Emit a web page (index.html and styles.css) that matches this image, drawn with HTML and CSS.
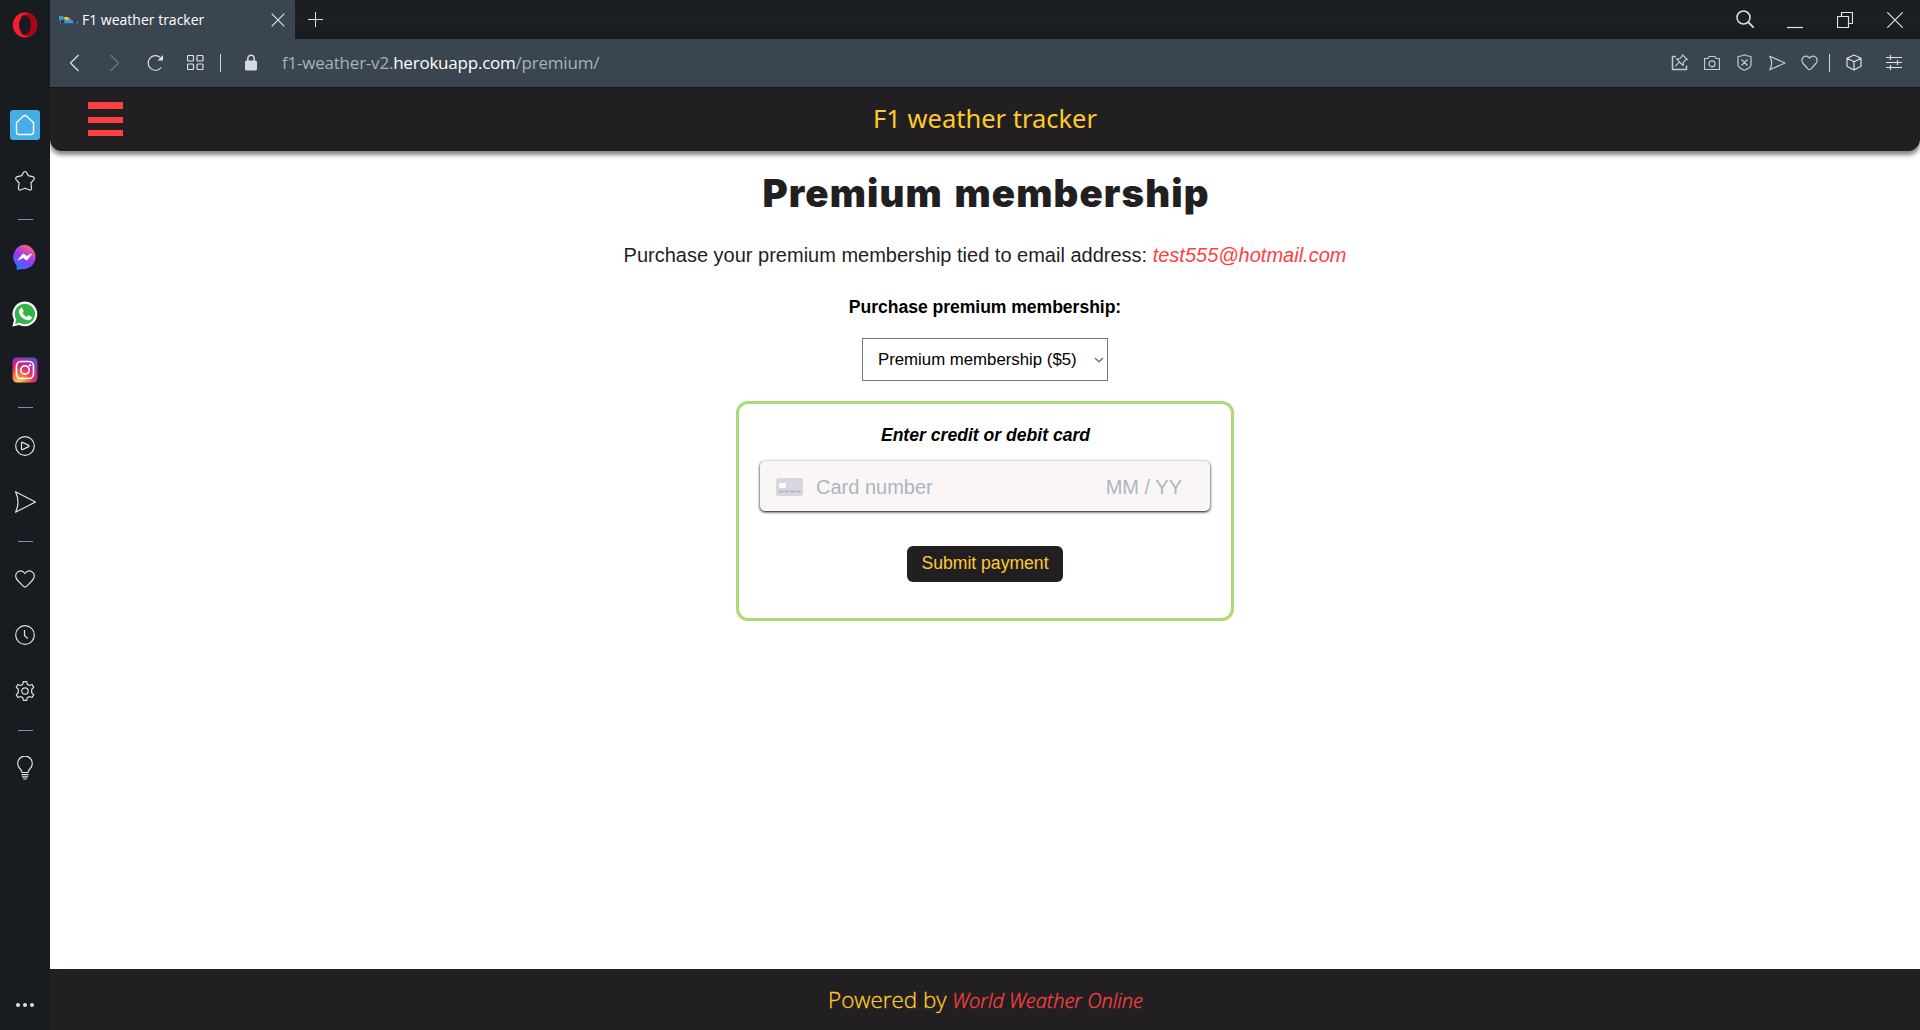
FILE: index.html
```
<!DOCTYPE html>
<html lang="en">
<head>
<meta charset="utf-8">
<title>F1 weather tracker</title>
<link rel="stylesheet" href="styles.css">
</head>
<body>
<div class="window">
  <aside class="sidebar">
    <div class="opera">
      <svg width="26" height="26" viewBox="0 0 26 26"><ellipse cx="13" cy="13" rx="12.2" ry="12.4" fill="#fa1e2d"/><path d="M9 4.5C12 1.500 17 .8 20.500 3.300A12.300 12.300 0 0 1 20.500 22.700C17 25.200 12 24.500 9 21.500Z" fill="#a80616"/><ellipse cx="13" cy="13" rx="6" ry="9.300" fill="#181b20"/></svg>
    </div>
    <nav class="rail">
      <a class="item"><span class="home"><svg width="22" height="24" viewBox="0 0 22 24"><path d="M2.500 9.500 9.300 3.200q1.700-1.500 3.400 0L19.500 9.500V19q0 2.500-2.500 2.500H5Q2.500 21.500 2.500 19Z" fill="none" stroke="#fff" stroke-width="1.400"/></svg></span></a>
      <a class="item"><svg class="line" width="22" height="22" viewBox="0 0 22 22"><path d="M9.400 2.600q1.600-2.200 3.200 0l1.700 3 4.900 1.300q1.900.8.700 2.700l-3 3.400.7 5.500q-.2 2-2 1.500L11 18.200 6.400 20q-1.900.5-2-1.500l.7-5.500-3-3.400Q1 7.700 2.800 6.900l4.900-1.300Z"/></svg></a>
      <hr>
      <a class="item"><svg width="26" height="26" viewBox="0 0 26 26"><defs><linearGradient id="ms" x1=".15" y1="1" x2=".7" y2="0"><stop offset="0" stop-color="#0a86ff"/><stop offset=".5" stop-color="#9a36ff"/><stop offset="1" stop-color="#ff5f72"/></linearGradient></defs><path d="M13 .8A12.200 12.200 0 1 1 9.500 25L4.700 26v-4.600A12.200 12.200 0 0 1 13 .8Z" fill="url(#ms)"/><path d="m6.300 16 4.300-5.700q.7-.6 1.400 0l2.700 2.100 4.900-2.400-4.300 5.700q-.7.600-1.400 0l-2.700-2.100Z" fill="#fff" stroke="#fff" stroke-width=".8"/></svg></a>
      <a class="item low"><svg width="26" height="26" viewBox="0 0 26 26"><path d="M.4 25.600 2 19A12.400 12.400 0 1 1 7 23.900Z" fill="#fff"/><path d="m3 23 1.200-4.600A10.200 10.200 0 1 1 7.700 21.800Z" fill="#34b348"/><path d="M8.300 7.500q1.400-1.300 2.200.1l1.100 2.600q.2.700-1.100 2 1.500 2.600 4.100 3.700l1.400-1.500q.5-.4 1 0l2.500 1.300q.6.500.2 1.500-1 2.300-3.700 2.100-6.300-1-9.100-7.300-.6-2.800 1.400-4.500Z" fill="#fff"/></svg></a>
      <a class="item"><svg width="26" height="26" viewBox="0 0 26 26"><defs><radialGradient id="ig" cx=".25" cy="1" r="1.150"><stop offset="0" stop-color="#ffd75a"/><stop offset=".25" stop-color="#fb8140"/><stop offset=".55" stop-color="#dc2a6f"/><stop offset=".8" stop-color="#a62db2"/><stop offset="1" stop-color="#5358cc"/></radialGradient></defs><rect x=".5" y=".5" width="25" height="25" rx="4.500" fill="url(#ig)"/><g fill="none" stroke="#fff" stroke-width="1.700"><rect x="4.500" y="4.500" width="17" height="17" rx="4.500"/><circle cx="13" cy="13" r="4.200"/></g><circle cx="18" cy="8.200" r="1.200" fill="#fff"/></svg></a>
      <hr class="high">
      <a class="item"><svg class="line" width="22" height="22" viewBox="0 0 22 22"><circle cx="11" cy="11" r="9.300"/><path d="M7.500 8q0-1 1-.6l6.200 3q1 .6 0 1.200l-6.200 3q-1 .4-1-.6Z"/></svg></a>
      <a class="item"><svg class="line" width="24" height="24" viewBox="0 0 24 24"><path d="M2.500 1.800 22.500 12l-20 10.200Q7.500 12 2.500 1.800Z"/></svg></a>
      <hr class="wide">
      <a class="item"><svg class="line" width="22" height="22" viewBox="0 0 22 22"><path d="M11 5.500Q8.500 2.200 5 3.200 1.600 4.600 1.700 8.200q.2 2.500 2.500 4.800l5 5.200q1.800 1.800 3.600 0l5-5.200q2.300-2.300 2.500-4.800.1-3.600-3.300-5Q13.500 2.200 11 5.500Z"/></svg></a>
      <a class="item"><svg class="line" width="22" height="22" viewBox="0 0 22 22"><circle cx="11" cy="11" r="9.300"/><path d="M10.500 6v5.500l3.200 3.200"/></svg></a>
      <a class="item"><svg class="line" width="22" height="22" viewBox="0 0 22 22"><circle cx="11" cy="11" r="3.200"/><path d="M8.800 4.200 9.300 1.700h3.400l.5 2.500 2.200 1.300 2.700-1 1.600 2.900-2 1.900v3.400l2 1.900-1.600 2.900-2.700-1-2.200 1.300-.5 2.500H9.300l-.5-2.500-2.200-1.300-2.700 1-1.600-2.900 2-1.900V9.300l-2-1.900 1.600-2.900 2.700 1Z"/></svg></a>
      <hr class="wide">
      <a class="item bulb"><svg class="line" width="18" height="24" viewBox="0 0 18 24"><path d="M6 16.500q0-2-2-3.800a7.300 7.300 0 1 1 10 0q-2 1.800-2 3.800ZM5.500 18.700h7M6 20.900h6M7.200 23h3.600"/></svg></a>
    </nav>
    <div class="more"><i></i><i></i><i></i></div>
  </aside>

  <div class="main">
    <div class="tabs">
      <div class="tab">
        <svg width="20" height="10" viewBox="0 0 20 10"><path d="M0 1h4v3l3 1 5-.2 3 1.200 4 .4v1.800H1V5H0Z" fill="#2f9be0"/><path d="M3.500 2.500 8 1.800l4 2.500-5 1Z" fill="#e9c52b"/><circle cx="3.500" cy="6.500" r="1.900" fill="#35383c"/><circle cx="16" cy="6.800" r="1.700" fill="#35383c"/></svg>
        <span class="tab-title">F1 weather tracker</span>
        <svg class="line" width="14" height="14" viewBox="0 0 14 14"><path d="m.7.7 12.600 12.600M13.300.7.700 13.300"/></svg>
      </div>
      <svg class="line plus" width="15" height="15" viewBox="0 0 15 15"><path d="M7.500 0v15M0 7.500h15"/></svg>
      <div class="controls">
        <svg class="line" width="19" height="19" viewBox="0 0 19 19"><circle cx="7.500" cy="7.500" r="6.500" stroke-width="1.500"/><path d="m12.200 12.200 5.500 5.500" stroke-width="1.800"/></svg>
        <svg class="line" width="16" height="19" viewBox="0 0 16 19"><path d="M0 17.500h16"/></svg>
        <svg class="line" width="16" height="16" viewBox="0 0 16 16"><path d="M.5 4.500h11v11H.5ZM4.500 4V.5h11v11H12"/></svg>
        <svg class="line" width="16" height="16" viewBox="0 0 16 16"><path d="m.3.300 15.400 15.400M15.700.3.300 15.700"/></svg>
      </div>
    </div>
    <div class="toolbar">
      <div class="nav">
        <svg class="line" width="11" height="18" viewBox="0 0 11 18"><path d="M9.500 1 1.500 9l8 8"/></svg>
        <svg class="line dim" width="11" height="18" viewBox="0 0 11 18"><path d="m1.500 1 8 8-8 8"/></svg>
        <svg class="line" width="18" height="18" viewBox="0 0 18 18"><path d="M14.200 13.500A7.300 7.300 0 1 1 13.200 3.400"/><path d="M16 1v5.500h-5.500Z" fill="#dde2e6" stroke="none"/></svg>
        <svg class="line" width="17" height="16" viewBox="0 0 17 16"><rect x=".5" y=".5" width="6" height="5.500" rx="1"/><rect x="10" y=".5" width="6" height="5.500" rx="1"/><rect x=".5" y="9" width="6" height="5.500" rx="1"/><rect x="10" y="9" width="6" height="5.500" rx="1"/></svg>
        <span class="bar"></span>
        <svg width="12" height="17" viewBox="0 0 12 17"><path d="M2.800 8V4.500a3.200 3.200 0 0 1 6.400 0V8" fill="none" stroke="#d3d9de" stroke-width="1.500"/><rect y="6.500" width="12" height="10" rx="1.500" fill="#d3d9de"/></svg>
        <span class="url">f1-weather-v2.<b>herokuapp.com</b>/premium/</span>
      </div>
      <div class="tools">
        <svg class="line soft" width="17" height="17" viewBox="0 0 17 17"><path d="M5 2.500H1.500v13h14v-4" stroke-width="1.500"/><path d="m11.500.8 4.700 4.700-1.600.4-2.300 2.300-.2 3.300L5.500 4.900l3.300-.2 2.300-2.300ZM8.300 8.200l-4 4"/></svg>
        <svg class="line soft" width="16" height="16" viewBox="0 0 16 16"><path d="M.5 3.500h3.300L5 1.500h6l1.200 2h3.300v11H.5Z"/><circle cx="8" cy="8.800" r="3"/></svg>
        <svg class="line soft" width="15" height="17" viewBox="0 0 15 17"><path d="M7.500.8q3 1.600 6.500 1.700v8q0 3.500-6.500 5.800Q1 14 1 10.500v-8Q4.500 2.400 7.500.8ZM4.500 5.500l6 6M10.500 5.500l-6 6"/></svg>
        <svg class="line soft" width="17" height="16" viewBox="0 0 17 16"><path d="M.8 1.200 16 8 .8 14.800Q4.500 8 .8 1.200Z"/></svg>
        <svg class="line soft" width="17" height="16" viewBox="0 0 17 16"><path d="M8.500 3Q6.500.6 3.800 1.300 1 2.300.9 5.300.9 7.500 3 9.500l4.200 4.600q1.300 1.200 2.600 0L14 9.500q2.100-2 2.100-4.200-.1-3-2.900-4Q10.500.6 8.500 3Z"/></svg>
        <span class="bar"></span>
        <svg class="line" width="16" height="17" viewBox="0 0 16 17"><path d="m8 1 7 3.300v8L8 16l-7-3.700v-8ZM1 4.300l7 3.500 7-3.500M8 7.800V16"/></svg>
        <svg class="line" width="16" height="16" viewBox="0 0 16 16"><path d="M0 2.500h16M0 7.500h16M0 12.500h16M4.500 0v5M11.500 5v5M4.500 10v5"/></svg>
      </div>
    </div>

    <div class="page">
      <header class="site-header">
        <div class="burger"><i></i><i></i><i></i></div>
        <div class="brand">F1 weather tracker</div>
      </header>
      <main class="content">
        <h1>Premium membership</h1>
        <p class="lead">Purchase your premium membership tied to email address: <em>test555@hotmail.com</em></p>
        <div class="label">Purchase premium membership:</div>
        <div class="select"><span>Premium membership ($5)</span><svg width="10" height="6" viewBox="0 0 10 6"><path d="m1 1 4 3.700L9 1" fill="none" stroke="#767676" stroke-width="1.500"/></svg></div>
        <section class="payment">
          <div class="payment-title">Enter credit or debit card</div>
          <div class="card-input">
            <svg width="27" height="18" viewBox="0 0 27 18"><rect width="27" height="18" rx="2.500" fill="#d7d8df"/><rect x="3" y="5" width="7" height="5" rx="1" fill="#fdfbfb"/><path d="M3 13.500h22" stroke="#b7b3c4" stroke-width="2" stroke-dasharray="4.500 1.200"/></svg>
            <span class="number">Card number</span>
            <span class="expiry">MM / YY</span>
          </div>
          <button class="submit">Submit payment</button>
        </section>
      </main>
      <footer class="site-footer">Powered by&nbsp;<em>World Weather Online</em></footer>
    </div>
  </div>
</div>
</body>
</html>
```
FILE: styles.css
```
* { box-sizing: border-box; }
body { margin: 0; font-family: "Liberation Sans", Arial, sans-serif; }
svg { display: block; flex: none; }

.window { display: flex; width: 1920px; height: 1030px; overflow: hidden; background: #fff; }

/* Browser sidebar */
.sidebar { display: flex; flex-direction: column; width: 50px; background: #181b20; }
.opera { height: 97px; padding: 12px 0 0 12px; }
.rail { display: flex; flex-direction: column; }
.item { display: flex; align-items: center; justify-content: center; height: 56px; }
.item.low { height: 57px; padding-top: 1px; }
.item .line { margin-right: 1px; }
.item.bulb .line { margin: 0; }
.home { display: flex; align-items: center; justify-content: center; width: 30px; height: 30px; border-radius: 3px; background: #45aee5; }
.rail hr { width: 15px; height: 1px; margin: 10px 0 9px 18px; border: 0; background: #84939c; }
.rail hr.wide { margin-top: 11px; }
.rail hr.high { margin: 9px 0 10px 18px; }
.more { display: flex; justify-content: center; gap: 3px; margin: auto 0 23px; }
.more i { width: 4px; height: 4px; border-radius: 50%; background: #d9dfe3; }

.line { fill: none; stroke: #dde2e6; stroke-width: 1.2; stroke-linejoin: round; }
.dim { stroke: #6b7680; }
.soft { stroke: #c3cacf; }

/* Tab strip and address bar */
.main { display: flex; flex: 1; flex-direction: column; }
.tabs { display: flex; align-items: center; height: 39px; background: linear-gradient(#191c20, #1c2024 50%, #16191d); }
.tab { display: flex; align-items: center; width: 245px; height: 39px; padding: 0 10px 0 9px; background: #3a4550; }
.tab-title { flex: 1; margin-left: 3px; color: #fff; font: 14px/39px "Open Sans", sans-serif; }
.plus { margin-left: 13px; stroke-width: 1; }
.controls { display: grid; grid-template-columns: 51px 50px 50px 33px; align-items: center; margin-left: auto; }
.toolbar { display: flex; justify-content: space-between; align-items: center; height: 49px; padding-bottom: 1px; border-bottom: 1px solid #16181b; background: #3a4550; }
.nav { display: grid; grid-template-columns: 40px 38px 40px 33px 25px 37px auto; align-items: center; padding-left: 19px; }
.tools { display: grid; grid-template-columns: 33px 33px 32px 32px 28px 17px 40px 34px; align-items: center; }
.bar { width: 1px; height: 18px; background: #cfd5da; }
.url { color: #a6b2bd; font: 17px/24px "Open Sans", sans-serif; letter-spacing: -.22px; }
.url b { color: #fff; font-weight: 400; }

/* Site */
.page { display: flex; flex: 1; flex-direction: column; background: #fff; }
.site-header { display: grid; grid-template-columns: 1fr auto 1fr; height: 63px; padding: 14px 38px 0; border-radius: 0 0 12px 12px; background: #221f22; box-shadow: 0 4px 4px rgba(34, 31, 34, .55); }
.burger { display: grid; grid-template-rows: 7px 6px 6px; row-gap: 7.500px; align-content: start; }
.burger i { width: 35px; background: #ff4040; }
.brand { color: #ffcb2b; font: 25.5px/32px "Noto Sans", sans-serif; }
.content { display: flex; flex: 1; flex-direction: column; align-items: center; padding-top: 19px; }
h1 { margin: 0 0 0 2px; color: #221f22; font: 900 38.4px/46px Inter, sans-serif; letter-spacing: 1.1px; word-spacing: 3px; }
.lead { margin: 27px 0 0; color: #221f22; font-size: 20px; line-height: 24px; }
em { color: #ff4040; }
.label { margin-top: 30px; font-size: 17.6px; font-weight: 700; line-height: 20px; letter-spacing: -.05px; }
.select { display: flex; align-items: center; justify-content: space-between; width: 246px; height: 43px; margin-top: 21px; padding: 0 3px 0 15px; border: 1px solid #767676; font-size: 16.8px; }
.payment { display: flex; flex-direction: column; align-items: center; width: 498px; height: 220px; margin-top: 20px; padding-top: 21px; border: 3px solid #a9dc76; border-radius: 12px; }
.payment-title { margin-left: 1px; font-size: 17.6px; font-weight: 700; font-style: italic; line-height: 20px; }
.card-input { display: flex; align-items: center; width: 450px; height: 50px; margin-top: 16px; padding: 2px 28px 0 16px; border-radius: 5px; background: #faf6f5; color: #aab7c4; font-size: 20px; box-shadow: 0 1px 3px #000; }
.number { margin-left: 13px; }
.expiry { margin-left: auto; }
.submit { width: 156px; height: 36px; margin-top: 35px; padding: 0 0 2px; border: 0; border-radius: 6px; background: #221f22; color: #ffcb2b; font: 17.6px "Liberation Sans", sans-serif; }
.site-footer { display: flex; align-items: baseline; justify-content: center; height: 61px; padding-left: 1px; background: #221f22; color: #ffcb2b; font: 300 22.4px/61px "Open Sans", sans-serif; -webkit-text-stroke: .3px; }
.site-footer em { font-size: 20px; }
```
